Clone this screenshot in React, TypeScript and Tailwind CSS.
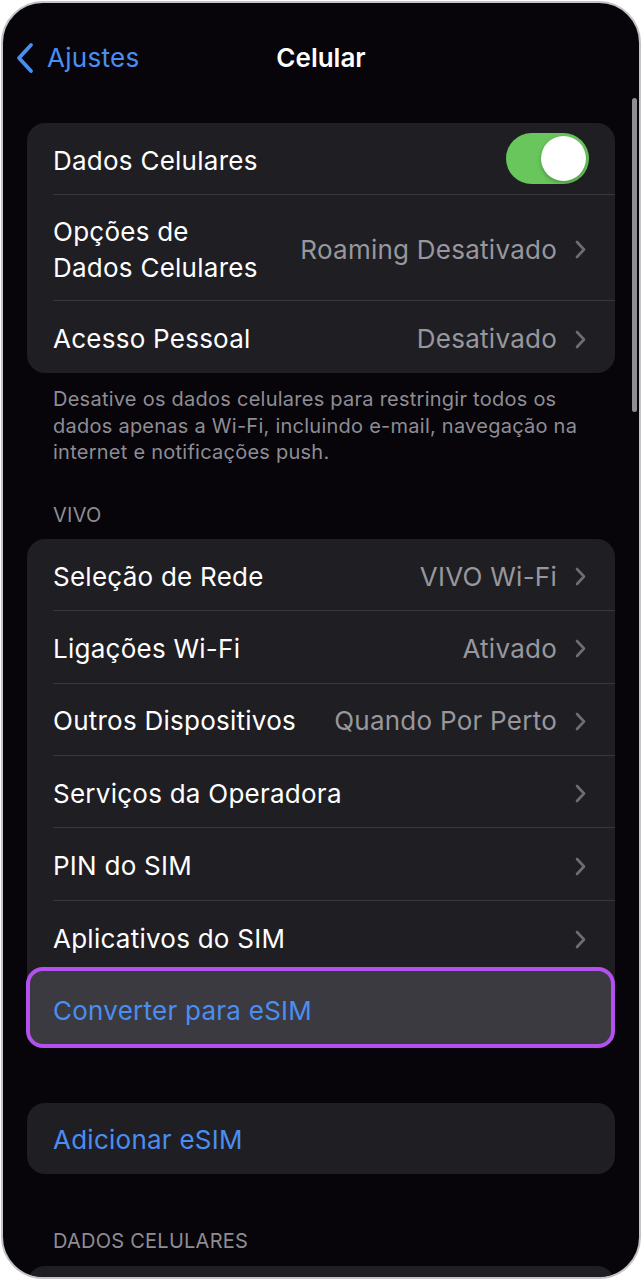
import React from "react";

const Chevron = () => (
  <svg width="11" height="19" viewBox="0 0 11 19" fill="none" className="shrink-0">
    <path d="M2 2l7 7.5L2 17" stroke="#6e6d73" strokeWidth="2.6" strokeLinecap="round" strokeLinejoin="round" />
  </svg>
);

const Row = ({ label, value, chevron = true, last = false }: { label: React.ReactNode; value?: string; chevron?: boolean; last?: boolean }) => (
  <div className="flex items-stretch pl-[26px]">
    <div className={`flex flex-1 items-center h-[72.4px] pt-[4px] pr-[29px] ${last ? "" : "border-b border-[#38373c]"}`}>
      <div className="flex-1 text-white text-[26px] leading-[36px] tracking-[0.25px]">{label}</div>
      {value && <div className="text-[#98979d] text-[26px] leading-[36px] tracking-[0.25px] mr-[18px]">{value}</div>}
      {chevron && <Chevron />}
    </div>
  </div>
);

export default function App() {
  return (
    <div className="w-[642px] h-[1280px] bg-white p-[1px]" style={{ fontFamily: "Inter, 'Noto Sans', sans-serif" }}>
      <div className="relative h-full rounded-[42px] border-[2px] border-[#c4c4c6] bg-[#07040a] overflow-hidden">
        {/* scrollbar */}
        <div className="absolute right-[2px] top-[95px] w-[5px] h-[314px] rounded-full bg-[#8f8e93]" />

        {/* nav */}
        <div className="pt-[35px] h-[75px] grid grid-cols-[1fr_auto_1fr] items-center px-[12px]">
          <div className="flex items-center gap-[12px] text-[#4a8ef2]">
            <svg width="20" height="32" viewBox="0 0 20 32" fill="none">
              <path d="M16 3L4 16l12 13" stroke="#4a8ef2" strokeWidth="3.8" strokeLinecap="round" strokeLinejoin="round" />
            </svg>
            <span className="text-[26px] leading-[40px] tracking-[0.3px]">Ajustes</span>
          </div>
          <div className="text-white text-[26px] leading-[40px] font-semibold">Celular</div>
          <div />
        </div>

        {/* card 1 */}
        <div className="mx-[24px] mt-[45px] rounded-[18px] bg-[#1f1e23]">
          <div className="flex items-stretch pl-[26px]">
            <div className="flex flex-1 items-center h-[72px] pr-[26px] border-b border-[#38373c]">
              <div className="flex-1 text-white text-[26px] leading-[36px] tracking-[0.25px] pt-[4px]">Dados Celulares</div>
              <div className="w-[83px] h-[51px] rounded-full bg-[#68c65c] p-[3px] flex justify-end">
                <div className="w-[45px] h-[45px] rounded-full bg-white shadow-[0_2px_4px_rgba(0,0,0,0.25)]" />
              </div>
            </div>
          </div>
          <div className="flex items-stretch pl-[26px]">
            <div className="flex flex-1 items-center h-[106px] pt-[4px] pr-[29px] border-b border-[#38373c]">
              <div className="flex-1 text-white text-[26px] leading-[36px] tracking-[0.25px]">
                Opções de
                <br />
                Dados Celulares
              </div>
              <div className="text-[#98979d] text-[26px] leading-[36px] tracking-[0.25px] mr-[18px]">Roaming Desativado</div>
              <Chevron />
            </div>
          </div>
          <Row label="Acesso Pessoal" value="Desativado" last />
        </div>

        {/* footer */}
        <div className="mt-[13px] px-[50px] text-[#8e8d93] text-[20px] leading-[26.5px] tracking-[0.25px]">
          Desative os dados celulares para restringir todos os dados apenas a Wi-Fi, incluindo e-mail, navegação na internet e notificações push.
        </div>

        <div className="mt-[36px] pl-[50px] text-[#8e8d93] text-[20px] leading-[26px] tracking-[0.25px]">VIVO</div>

        {/* card 2 */}
        <div className="mx-[24px] mt-[11px] rounded-[18px] bg-[#1f1e23]">
          <Row label="Seleção de Rede" value="VIVO Wi-Fi" />
          <Row label="Ligações Wi-Fi" value="Ativado" />
          <Row label="Outros Dispositivos" value="Quando Por Perto" />
          <Row label="Serviços da Operadora" />
          <Row label="PIN do SIM" />
          <Row label="Aplicativos do SIM" last />
          <div className="relative h-[72px] flex items-center pl-[26px]">
            <div className="absolute -top-[6px] -bottom-[3px] -left-[1px] right-0 rounded-[17px] border-[4px] border-[#b450ef] bg-[#3b3a40]" />
            <span className="relative text-[#4a8ef2] text-[26px] leading-[36px] tracking-[0.25px] mt-[4px]">Converter para eSIM</span>
          </div>
        </div>

        {/* card 3 */}
        <div className="mx-[24px] mt-[58px] rounded-[18px] bg-[#1f1e23] h-[71px] flex items-center pl-[26px] pt-[2px]">
          <span className="text-[#4a8ef2] text-[26px] leading-[36px] tracking-[0.25px]">Adicionar eSIM</span>
        </div>

        <div className="mt-[54px] pl-[50px] text-[#8e8d93] text-[20px] leading-[26px] tracking-[0.25px]">DADOS CELULARES</div>

        <div className="mx-[24px] mt-[12px] rounded-[18px] bg-[#1f1e23] h-[72px]" />
      </div>
    </div>
  );
}
